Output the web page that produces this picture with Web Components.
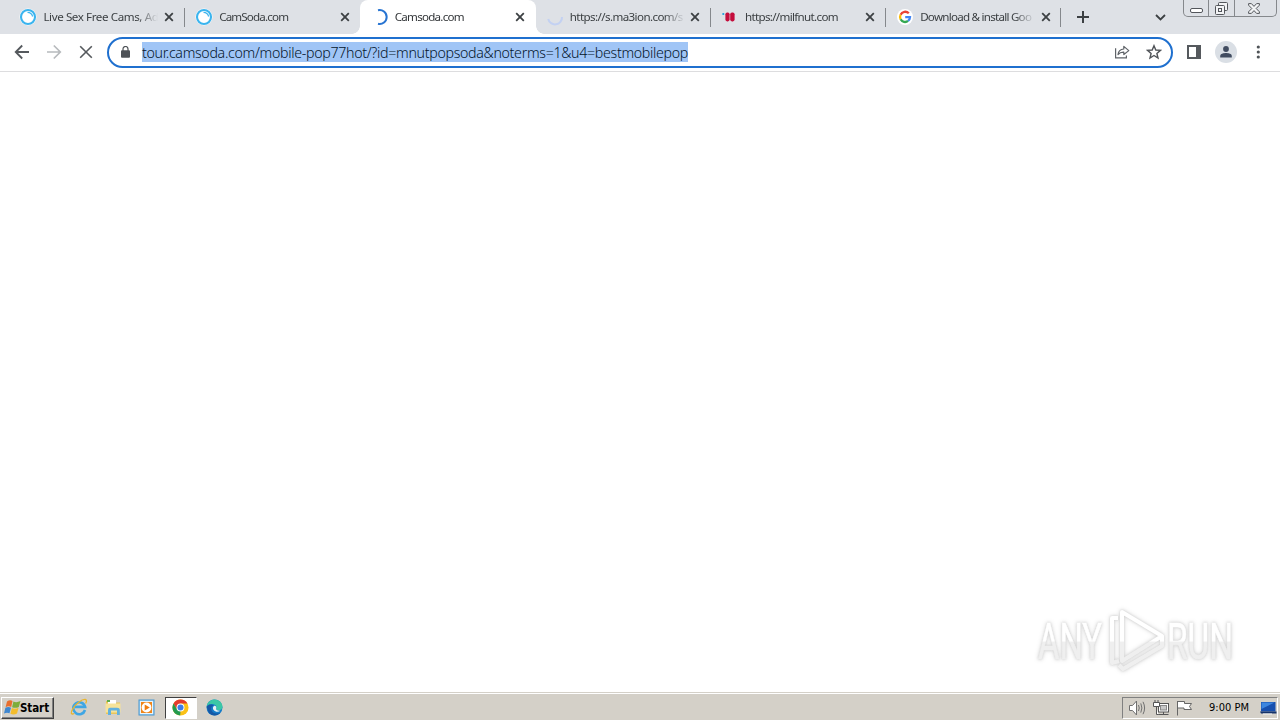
<!DOCTYPE html>
<html lang="en">
<head>
<meta charset="utf-8">
<title>Camsoda.com</title>
<style>
html, body {
  margin: 0;
  width: 1280px;
  height: 720px;
  overflow: hidden;
  background: #ffffff;
}
</style>
</head>
<body>
<desktop-screen></desktop-screen>
<script>
function define(name, style, template, setup) {
  customElements.define(name, class extends HTMLElement {
    constructor() {
      super();
      this.attachShadow({ mode: "open" });
      this.shadowRoot.innerHTML = `<style>* { box-sizing: border-box; } svg { display: block; } ${style}</style>${template}`;
    }
    connectedCallback() {
      if (setup) setup(this);
    }
  });
}

// spreads its letters so the line is as wide as the width attribute
define("fit-text", `
:host {
  display: inline-block;
  white-space: pre;
}
span {
  display: inline-block;
}`, `<span><slot></slot></span>`, (el) => {
  const span = el.shadowRoot.querySelector("span");
  span.style.letterSpacing = "0px";
  const gap = Number(el.getAttribute("width")) - span.getBoundingClientRect().width;
  span.style.letterSpacing = gap / el.textContent.length + "px";
});

define("cam-icon", `:host { display: block; }`, `
<svg width="18" height="18" viewBox="0 0 18 18" fill="none">
  <circle cx="9" cy="9" r="8.5" fill="#fff"></circle>
  <circle cx="9" cy="9" r="7" stroke="#3bb4ee" stroke-width="2.1"></circle>
  <path d="M8.5 4.4C11 4.4 13 6 13.6 8.5" stroke="#3bb4ee" stroke-width="1.2"></path>
</svg>`);

define("browser-tab", `
:host {
  position: relative;
  display: flex;
  flex: 0 0 175.2px;
  align-items: center;
  height: 34px;
  padding-left: 10px;
  color: #3c4043;
}
:host([active]) {
  flex-basis: 176px;
  padding-left: 11px;
  background: #fff;
  border-radius: 8px 8px 0 0;
  color: #333639;
}
:host([active])::before, :host([active])::after {
  content: "";
  position: absolute;
  bottom: 0;
  width: 8px;
  height: 8px;
}
:host([active])::before {
  left: -8px;
  background: radial-gradient(circle at 0 0, transparent 7.5px, #fff 8px);
}
:host([active])::after {
  right: -8px;
  background: radial-gradient(circle at 100% 0, transparent 7.5px, #fff 8px);
}
:host([line])::after {
  content: "";
  position: absolute;
  right: 0;
  top: 8px;
  width: 1px;
  height: 19px;
  background: #85888c;
}
.icon {
  display: flex;
  justify-content: center;
  width: 18px;
}
.title {
  width: 115px;
  margin-left: 6px;
  overflow: hidden;
  white-space: nowrap;
  font: 11.6px/16px "Noto Sans", "Open Sans", sans-serif;
  -webkit-mask-image: linear-gradient(90deg, #000 94px, transparent 115px);
}
.close {
  margin-left: 5.5px;
}`, `
<div class="icon"><slot name="icon"></slot></div>
<div class="title"><slot></slot></div>
<svg class="close" width="10" height="10" viewBox="0 0 10 10">
  <path d="M1.2 1.2L8.8 8.8M8.8 1.2L1.2 8.8" stroke="#3c4043" stroke-width="1.8"></path>
</svg>`);

define("window-buttons", `
:host {
  display: flex;
  width: 94px;
  height: 17px;
  border: 1px solid #85888c;
  border-top: 0;
  border-radius: 0 0 5px 5px;
}
div {
  display: flex;
  align-items: center;
  justify-content: center;
}
div + div {
  border-left: 1px solid #85888c;
}`, `
<div style="width:24px;padding-top:4px"><svg width="13" height="5" viewBox="0 0 13 5"><rect x=".5" y=".5" width="12" height="4" rx="1.5" fill="#fff" stroke="#53565b"></rect></svg></div>
<div style="width:26px"><svg width="14" height="13" viewBox="0 0 14 13" fill="#f2f3f5" stroke="#53565b"><rect x="3.5" y=".5" width="9" height="8" rx="1"></rect><rect x=".5" y="3.5" width="9" height="9" rx="1"></rect><rect x="3.5" y="6.5" width="3" height="3"></rect></svg></div>
<div style="flex:1;padding-right:3px"><svg width="12" height="11" viewBox="0 0 12 11"><path d="M.6.6H3.4L6 3.4L8.6.6H11.4V2.2L8.2 5.5L11.4 8.8V10.4H8.6L6 7.6L3.4 10.4H.6V8.8L3.8 5.5L.6 2.2Z" fill="#f2f3f5" stroke="#53565b"></path></svg></div>`);

define("tab-strip", `
:host {
  display: flex;
  height: 34px;
  padding-left: 9.4px;
  background: #dee1e6;
}
.new {
  margin: 11px 0 0 16px;
}
.search {
  margin: 14px 0 0 66px;
}
window-buttons {
  margin-left: 17px;
}`, `
<browser-tab line><cam-icon slot="icon"></cam-icon><fit-text width="115">Live Sex Free Cams, Ad</fit-text></browser-tab>
<browser-tab style="padding-left:10.6px"><cam-icon slot="icon"></cam-icon><fit-text width="69">CamSoda.com</fit-text></browser-tab>
<browser-tab active>
  <svg slot="icon" width="18" height="18" viewBox="0 0 18 18" fill="none"><path d="M7 2.2A7 7 0 1 1 7 15.8" stroke="#2774d2" stroke-width="2"></path></svg>
  <fit-text width="69">Camsoda.com</fit-text>
</browser-tab>
<browser-tab line>
  <svg slot="icon" width="18" height="18" viewBox="0 0 18 18" fill="none"><path d="M2.2 11A7 7 0 0 0 16 9" stroke="#c3d1f2" stroke-width="2"></path></svg>
  <fit-text width="113">https://s.ma3ion.com/s</fit-text>
</browser-tab>
<browser-tab line>
  <svg slot="icon" width="18" height="18" viewBox="0 0 18 18"><rect x="4.4" y="4.4" width="4.2" height="9" rx="1.8" fill="#c40d3c"></rect><rect x="9.2" y="4.4" width="4.4" height="9" rx="1.8" fill="#c40d3c"></rect><rect x="1.4" y="5" width="1.8" height="2" fill="#2ca4dc"></rect></svg>
  <fit-text width="93">https://milfnut.com</fit-text>
</browser-tab>
<browser-tab line>
  <svg slot="icon" width="18" height="18" viewBox="0 0 18 18" fill="none"><circle cx="9" cy="9" r="8" fill="#fff"></circle><g stroke-width="2.3"><path d="M12.8 5.3A5 5 0 0 0 4.6 6.7" stroke="#ea4335"></path><path d="M4.6 6.7A5 5 0 0 0 4.6 11.3" stroke="#fbbc05"></path><path d="M4.6 11.3A5 5 0 0 0 12.1 12.9" stroke="#34a853"></path><path d="M12.1 12.9A5 5 0 0 0 14 9.2H9.2" stroke="#4285f4"></path></g></svg>
  <fit-text width="111">Download &amp; install Goo</fit-text>
</browser-tab>
<svg class="new" width="12" height="12" viewBox="0 0 12 12"><path d="M6 0V12M0 6H12" stroke="#3c4043" stroke-width="2"></path></svg>
<svg class="search" width="11" height="7" viewBox="0 0 11 7" fill="none"><path d="M1 1L5.5 5.4L10 1" stroke="#3c4043" stroke-width="1.8"></path></svg>
<window-buttons></window-buttons>`);

define("address-bar", `
:host {
  display: flex;
  align-items: center;
  width: 1066px;
  height: 31px;
  padding: 0 9px 0 13px;
  border: 2px solid #1f70cf;
  border-radius: 16px;
  background: #fff;
}
.url {
  height: 20px;
  margin-left: 11px;
  background: #a0c5f6;
  color: #04152b;
  font: 300 14.2px/21px "Noto Sans", "Open Sans", sans-serif;
}
.share {
  margin-left: auto;
}
.star {
  margin-left: 16px;
}`, `
<svg width="9" height="12" viewBox="0 0 9 12" style="margin:0 1px 1px -1px"><rect y="4.3" width="9" height="7.5" rx="1" fill="#4d5156"></rect><path d="M2 5V3A2.5 2.5 0 0 1 7 3V5" fill="none" stroke="#4d5156" stroke-width="1.2"></path></svg>
<fit-text class="url" width="546">tour.camsoda.com/mobile-pop77hot/?id=mnutpopsoda&amp;noterms=1&amp;u4=bestmobilepop</fit-text>
<svg class="share" width="16" height="16" viewBox="0 0 16 16" fill="none" stroke="#5f6368" stroke-width="1.2"><path d="M1.6 4.2V13.9H12.4V11.5"></path><path d="M4 10.5C4.4 6.8 6.5 5.2 9.8 5V2.4L14.8 6.6L9.8 10.5V8.1C7.3 8 5.4 8.8 4 10.5Z" stroke-linejoin="round"></path></svg>
<svg class="star" width="16" height="16" viewBox="0 0 16 16" fill="none" stroke="#505458" stroke-width="1.4"><path d="M8 1.7L9.8 6L14.4 6.4L10.9 9.4L12 14L8 11.5L4 14L5.1 9.4L1.6 6.4L6.2 6Z"></path></svg>`);

define("browser-toolbar", `
:host {
  display: flex;
  align-items: center;
  height: 38px;
  padding: 0 0 1px 14px;
  border-bottom: 1px solid #dddddf;
  background: #fff;
}
svg {
  flex: none;
}
address-bar {
  margin-left: 14px;
}`, `
<svg width="16" height="16" viewBox="0 0 16 16" fill="none" stroke="#55595d" stroke-width="1.8"><path d="M15 8H2M8.2 1.5L1.7 8L8.2 14.5"></path></svg>
<svg style="margin-left:16px" width="16" height="16" viewBox="0 0 16 16" fill="none" stroke="#b7babd" stroke-width="1.7"><path d="M1 8H14M7.8 1.5L14.3 8L7.8 14.5"></path></svg>
<svg style="margin-left:17px" width="14" height="14" viewBox="0 0 14 14" stroke="#55595d" stroke-width="1.6"><path d="M1.2 1.2L12.8 12.8M12.8 1.2L1.2 12.8"></path></svg>
<address-bar></address-bar>
<svg style="margin-left:14px" width="14" height="14" viewBox="0 0 14 14"><path d="M0 0H14V14H0ZM2 2V12H9V2Z" fill="#55595d" fill-rule="evenodd"></path></svg>
<svg style="margin-left:14px" width="22" height="22" viewBox="0 0 22 22"><circle cx="11" cy="11" r="11" fill="#dadfe5"></circle><circle cx="11" cy="8" r="2.9" fill="#414c60"></circle><path d="M5.2 16.5V15C5.2 12.8 8.5 12 11 12S16.8 12.8 16.8 15V16.5Z" fill="#414c60"></path></svg>
<svg style="margin-left:19px" width="4" height="14" viewBox="0 0 4 14" fill="#4f5357"><circle cx="2.3" cy="2" r="1.6"></circle><circle cx="2.3" cy="7" r="1.6"></circle><circle cx="2.3" cy="12" r="1.6"></circle></svg>`);

define("any-run-mark", `
:host {
  display: block;
  width: 250px;
  height: 80px;
}
svg {
  filter: drop-shadow(0 0 1px #d2d2d2) drop-shadow(0 0 2px #dcdcdc);
}
text {
  font-family: Roboto, sans-serif;
  font-size: 50px;
  stroke: url(#fade);
  stroke-width: .6px;
}`, `
<svg width="250" height="80" viewBox="0 0 250 80">
  <defs><linearGradient id="fade" x1="0" y1="0" x2="0" y2="80" gradientUnits="userSpaceOnUse"><stop offset=".51" stop-color="#fff"></stop><stop offset=".53" stop-color="#efefef"></stop></linearGradient></defs>
  <text x="8" y="59" textLength="64" lengthAdjust="spacingAndGlyphs" fill="url(#fade)">ANY</text>
  <text x="137" y="59" textLength="66" lengthAdjust="spacingAndGlyphs" fill="url(#fade)">RUN</text>
  <g fill="none" stroke="url(#fade)" stroke-width="4" stroke-linejoin="round">
    <path d="M92 12L132 36L92 61Z"></path>
    <path d="M88 18H82V63L89 61M89 65L93 69L132 46V36"></path>
  </g>
</svg>`);

define("start-button", `
:host {
  display: flex;
  align-items: center;
  width: 53px;
  height: 22px;
  padding-left: 2px;
  border: 1px solid;
  border-color: #fff #404040 #404040 #fff;
  box-shadow: inset -1px -1px #808080;
  color: #000;
  font: bold 11.5px/16px "DejaVu Sans Condensed", "DejaVu Sans", sans-serif;
}`, `
<svg width="17" height="17" viewBox="0 0 17 17"><path d="M3 2.5Q6 .5 8.5 2L7.2 8Q4.5 6.6 1.6 8.2Z" fill="#e86e2e"></path><path d="M9.4 2.5Q12.5 4 16.5 2L14.8 8Q11.5 9.6 8.1 8.2Z" fill="#7dad3c"></path><path d="M1.4 8.8Q4.5 7.4 7 8.8L5.5 14.3Q3 13 0 14.5Z" fill="#3f87cf"></path><path d="M7.9 9Q11 10.6 14.6 8.8L13 14.5Q9.6 16.3 6.4 14.8Z" fill="#f4bd2c"></path></svg>
<fit-text width="29" style="margin-left:-1px">Start</fit-text>`);

define("system-tray", `
:host {
  display: flex;
  align-items: center;
  width: 156px;
  height: 22px;
  padding-left: 6px;
  border: 1px solid;
  border-color: #808080 #fff #fff #808080;
  color: #000;
  font: 11px/16px "DejaVu Sans Condensed", "DejaVu Sans", sans-serif;
}
svg {
  flex: none;
}`, `
<svg width="18" height="16" viewBox="0 0 18 16" fill="none" stroke="#707070"><path d="M.5 5.5H3.5L7.5 1V15L3.5 10.5H.5Z" fill="#fff"></path><path d="M9.5 5Q11 8 9.5 11M11.8 3.4Q14 8 11.8 12.6M14 1.8Q17.2 8 14 14.2"></path></svg>
<svg style="margin-left:6px" width="17" height="16" viewBox="0 0 17 16" fill="#fff" stroke="#555"><rect x="5.5" y="3.5" width="10" height="8.5"></rect><rect x="7.5" y="5.5" width="6" height="4.5" fill="#c8c8c8" stroke="#888"></rect><path d="M4.5 14.5H15.5M10.5 12V14"></path><path d="M.5 2.5H6.5V6.5H.5ZM2 0V2.5M5 0V2.5M3.5 6.5V14.5H5.5"></path></svg>
<svg style="margin-left:6px" width="17" height="16" viewBox="0 0 17 16" fill="#fff" stroke="#666"><path d="M1.5 1V15.5M2 1.5H8.5V3.5H15.5L13.5 6.5L15.5 9.5H8V8H2"></path></svg>
<fit-text style="margin-left:16px" width="40">9:00 PM</fit-text>
<svg style="margin-left:11px" width="17" height="14" viewBox="0 0 17 14"><path d="M1 1H15.5V10.5H1Z" fill="#174fae"></path><path d="M1.5 1.5H14.5L1.5 8Z" fill="#3d86df"></path><path d="M0 10.5H16.5V12.5H1Z" fill="#15336b"></path><path d="M3 13H12" stroke="#f4f4f4"></path></svg>`);

define("task-bar", `
:host {
  display: flex;
  align-items: center;
  height: 28px;
  padding: 2px 2px 0 1px;
  border-top: 1px solid #d4d0c8;
  box-shadow: inset 0 1px #fff;
  background: #d4d0c8;
}
.item {
  display: flex;
  align-items: center;
  justify-content: center;
  width: 32px;
  height: 22px;
  margin-right: 2px;
  padding: 0 1px 1px 0;
}
.pressed {
  border: 1px solid;
  border-color: #404040 #fff #fff #404040;
  background: #fff;
}
start-button {
  margin-right: 9px;
}
system-tray {
  margin-left: auto;
}`, `
<start-button></start-button>
<div class="item"><svg width="18" height="18" viewBox="0 0 18 18" fill="none"><path d="M15 12A6 6 0 1 1 15.1 8.9H5" stroke="#3fa6e4" stroke-width="2.6"></path><path d="M4.2 15.5C1 17 .2 15 2.8 10.8C6 5.5 12 1 15.4 1.5C17 1.8 16.6 3.8 15.6 5.5" stroke="#e9b52e" stroke-width="1.3"></path></svg></div>
<div class="item"><svg width="18" height="18" viewBox="0 0 18 18"><path d="M2 3H7L8 4.5H16V16H2Z" fill="#e8c65a"></path><path d="M4 2H12V8H4Z" fill="#fff"></path><path d="M3 2H6V4H3Z" fill="#5cae4a"></path><path d="M1.5 5.5H16.5V14.5H1.5Z" fill="#f6e39a"></path><path d="M4 17V12Q4 9.8 6 9.8H13Q15.8 9.8 15.8 12V17H13V12.5H7V17Z" fill="#62b1df"></path></svg></div>
<div class="item"><svg width="17" height="17" viewBox="0 0 17 17"><rect x="1" y="1" width="15" height="15" fill="#a8d6f2" stroke="#4795cf"></rect><rect x="2.5" y="2.5" width="12" height="12" fill="#ef8519" stroke="#e9f5fc"></rect><circle cx="8.5" cy="8.5" r="4.9" fill="#fff"></circle><path d="M6.7 5.4L11.8 8.5L6.7 11.6Z" fill="#ef7d10"></path></svg></div>
<div class="item pressed"><svg width="17" height="17" viewBox="0 0 18 18"><circle cx="9" cy="9" r="8.5" fill="#fbc116"></circle><path d="M9 9L5.4 11.1L1.6 4.7A8.5 8.5 0 0 1 16.4 4.8H9Z" fill="#e33b2e"></path><path d="M1.6 4.7L5.4 11.1L9 13L8.6 17.5A8.5 8.5 0 0 1 1.6 4.7Z" fill="#229a4f"></path><circle cx="9" cy="9" r="4.2" fill="#fff"></circle><circle cx="9" cy="9" r="3.2" fill="#3d7de8"></circle></svg></div>
<div class="item"><svg width="17" height="17" viewBox="0 0 17 17"><circle cx="8.5" cy="8.5" r="8" fill="#147bc9"></circle><path d="M.6 7.5C1.5 2.6 5 .5 8.5.5C13.5.5 16.5 4.3 16.5 7.7C16.5 10.5 14 11.6 11.8 11.2C9.3 10.8 10.8 9.5 10.4 7.8C9.5 4.3 3.5 4.1.6 7.5Z" fill="#3bc7a6"></path><path d="M.6 7.5C3 4.7 6.5 5 7.7 6.6C5.1 7.3 4.5 10 6 12.3C7.7 15 12 15 14.6 13.5C11.4 17.8 5.5 17 2.7 13.8Z" fill="#1658a5"></path><path d="M7.7 7.2C9 6 10.9 7.7 10.2 9.3C9.7 10.5 11 11.9 14.2 11.8C12.7 13.3 9.1 13.1 7.6 11C6.7 9.6 6.7 8.1 7.7 7.2Z" fill="#e7f1f5"></path></svg></div>
<system-tray></system-tray>`);

define("desktop-screen", `
:host {
  display: flex;
  flex-direction: column;
  width: 1280px;
  height: 720px;
  background: #fff;
}
main {
  display: flex;
  flex: 1;
  align-items: flex-end;
  justify-content: flex-end;
  padding-bottom: 12px;
}`, `
<tab-strip></tab-strip>
<browser-toolbar></browser-toolbar>
<main><any-run-mark></any-run-mark></main>
<task-bar></task-bar>`);
</script>
</body>
</html>
